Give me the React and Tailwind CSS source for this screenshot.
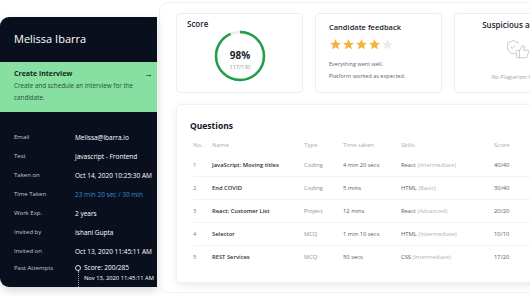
import { ShieldCheck, ThumbsUp } from "lucide-react";

const details = [
  { label: "Email", value: "Melissa@ibarra.io" },
  { label: "Test", value: "Javascript - Frontend" },
  { label: "Taken on", value: "Oct 14, 2020  10:25:30 AM" },
  { label: "Time Taken", value: "23 min 20 sec / 30 min", blue: true },
  { label: "Work Exp.", value: "2 years" },
  { label: "Invited by", value: "Ishani Gupta" },
  { label: "Invited on", value: "Oct 13, 2020  11:45:11 AM" },
];

const questions = [
  { no: 1, name: "JavaScript: Moving titles", type: "Coding", time: "4 min 20 secs", skill: "React", level: "Intermediate", score: "40/40" },
  { no: 2, name: "End COVID", type: "Coding", time: "5 mins", skill: "HTML", level: "Basic", score: "30/40" },
  { no: 3, name: "React: Customer List", type: "Project", time: "12 mins", skill: "React", level: "Advanced", score: "20/20" },
  { no: 4, name: "Selector", type: "MCQ", time: "1 min 10 secs", skill: "HTML", level: "Intermediate", score: "10/10" },
  { no: 5, name: "REST Services", type: "MCQ", time: "50 secs", skill: "CSS", level: "Intermediate", score: "17/20" },
];

function Star({ filled }) {
  return (
    <svg width="13" height="13" viewBox="0 0 24 24">
      <path
        d="M12 2l2.9 6.6 7.1.6-5.4 4.7 1.6 7-6.2-3.7-6.2 3.7 1.6-7L2 9.2l7.1-.6z"
        fill={filled ? "#f4b23e" : "#e9ecef"}
      />
    </svg>
  );
}

function ScoreRing() {
  const r = 24;
  const c = 2 * Math.PI * r;
  const pct = 0.93;
  return (
    <div className="relative w-[52px] h-[52px]">
      <svg width="52" height="52" viewBox="0 0 52 52">
        <circle cx="26" cy="26" r={r} fill="none" stroke="#e8efea" strokeWidth="2.5" />
        <circle
          cx="26"
          cy="26"
          r={r}
          fill="none"
          stroke="#1f9e45"
          strokeWidth="2.5"
          strokeDasharray={`${c * pct} ${c}`}
          transform="rotate(-90 26 26)"
        />
      </svg>
      <div className="absolute inset-0 flex flex-col items-center pt-[19px]">
        <span className="text-[10px] font-bold text-[#1d2330] leading-[13px]">98%</span>
        <span className="text-[5.5px] text-[#8a9199] leading-[8px] mt-[1px]">117/130</span>
      </div>
    </div>
  );
}

export default function App() {
  return (
    <div className="w-[530px] h-[296px] overflow-hidden bg-white flex font-['Open_Sans',sans-serif]">
      {/* left candidate panel */}
      <aside className="w-[157px] shrink-0 mt-[17px] h-[270px] bg-[#0a0f1d] rounded-l-[9px] shadow-[0_4px_10px_rgba(0,0,0,0.15)] flex flex-col overflow-hidden">
        <div className="h-[45px] shrink-0 pl-[14px] pt-[14px]">
          <h1 className="text-[11px] leading-[16px] text-white">Melissa Ibarra</h1>
        </div>
        <div className="h-[50px] shrink-0 bg-[#87dfa2] pl-[14px] pr-[4px] pt-[6px]">
          <div className="flex items-center justify-between">
            <span className="text-[7px] font-bold leading-[12px] text-[#142b1c]">Create interview</span>
            <span className="text-[9px] leading-[12px] text-[#142b1c]">→</span>
          </div>
          <p className="text-[6.3px] leading-[12px] text-[#245236] w-[132px]">
            Create and schedule an interview for the candidate.
          </p>
        </div>
        <div className="pl-[14px] pt-[16px] flex flex-col shrink-0">
          {details.map((d) => (
            <div key={d.label} className="flex h-[19px] shrink-0 items-center">
              <span className="w-[61px] text-[6px] text-[#c3c8d0]">{d.label}</span>
              <span className={`text-[6.5px] whitespace-nowrap ${d.blue ? "text-[#3f86d6]" : "text-white"}`}>{d.value}</span>
            </div>
          ))}
          <div className="flex pt-[1px]">
            <span className="w-[61px] shrink-0 text-[6px] text-[#c3c8d0] leading-[12px]">Past Attempts</span>
            <div className="flex">
              <div className="flex flex-col items-center w-[8px] -ml-[1px] pt-[3px]">
                <div className="w-[6px] h-[6px] rounded-full border border-[#d8dce2]" />
                <div className="w-0 h-[20px] border-l border-dotted border-[#9aa1ab]" />
              </div>
              <div className="pl-[2px] whitespace-nowrap">
                <div className="text-[6.5px] text-white leading-[12px]">Score: 200/285</div>
                <div className="text-[5.8px] text-white leading-[9px]">Nov 13, 2020 11:45:11 AM</div>
              </div>
            </div>
          </div>
        </div>
      </aside>

      {/* main report */}
      <main className="ml-[2px] mt-[2px] h-[291px] w-[400px] shrink-0 border border-[#eef0f3] rounded-l-[10px] pl-[16px] pt-[10px]">
        <div className="flex gap-[12px]">
          <div className="w-[127px] h-[80px] shrink-0 border border-[#eceef1] rounded-[4px] pl-[10px] pt-[4px]">
            <div className="text-[8px] font-semibold text-[#1d2330] leading-[12px]">Score</div>
            <div className="pl-[27px]">
              <ScoreRing />
            </div>
          </div>
          <div className="w-[127px] h-[80px] shrink-0 border border-[#eceef1] rounded-[4px] pl-[13px] pt-[7px]">
            <div className="text-[7.5px] font-semibold text-[#1d2330] leading-[12px]">Candidate feedback</div>
            <div className="flex mt-[5px]">
              <Star filled />
              <Star filled />
              <Star filled />
              <Star filled />
              <Star />
            </div>
            <p className="text-[5.5px] text-[#5e656d] leading-[12px] mt-[7px]">Everything went well.</p>
            <p className="text-[5.5px] text-[#5e656d] leading-[12px]">Platform worked as expected.</p>
          </div>
          <div className="w-[127px] h-[80px] shrink-0 border border-[#eceef1] rounded-[4px] pt-[5px] flex flex-col items-center">
            <div className="text-[8px] font-semibold text-[#1d2330] leading-[12px] whitespace-nowrap">Suspicious activity</div>
            <div className="relative w-[26px] h-[22px] mt-[8px]">
              <ShieldCheck className="absolute left-0 top-0 text-[#b9c5cc]" size={16} strokeWidth={1.4} />
              <ThumbsUp className="absolute left-[10px] top-[5px] text-[#b9c5cc] bg-white" size={15} strokeWidth={1.4} />
            </div>
            <p className="text-[5.5px] text-[#9ea6ae] leading-[12px] mt-[10px] whitespace-nowrap">No Plagiarism found</p>
          </div>
        </div>

        <section className="mt-[11px] w-[370px] h-[179px] border border-[#f0f1f3] rounded-[5px] shadow-[0_3px_8px_rgba(0,0,0,0.08)] pl-[13px] pt-[14px]">
          <h2 className="text-[8.5px] font-bold text-[#111827] leading-[14px]">Questions</h2>
          <div className="pl-[3px] mt-[3px]">
            <div className="grid grid-cols-[19px_92px_39px_58px_93px_1fr] h-[18px] items-center text-[6px] text-[#a3adb6]">
              <span>No.</span>
              <span>Name</span>
              <span>Type</span>
              <span>Time taken</span>
              <span>Skills</span>
              <span>Score</span>
            </div>
            {questions.map((q, i) => (
              <div
                key={q.no}
                className={`grid grid-cols-[19px_92px_39px_58px_93px_1fr] h-[23px] items-center text-[5.8px] text-[#555c64] ${
                  i < questions.length - 1 ? "border-b border-[#f0f2f4]" : ""
                }`}
              >
                <span className="text-[#777e86]">{q.no}</span>
                <span className="font-semibold text-[#2a3038]">{q.name}</span>
                <span className="text-[#8a9199]">{q.type}</span>
                <span>{q.time}</span>
                <span>
                  {q.skill} <span className="text-[#aab3bb]">({q.level})</span>
                </span>
                <span>{q.score}</span>
              </div>
            ))}
          </div>
        </section>
      </main>
    </div>
  );
}
